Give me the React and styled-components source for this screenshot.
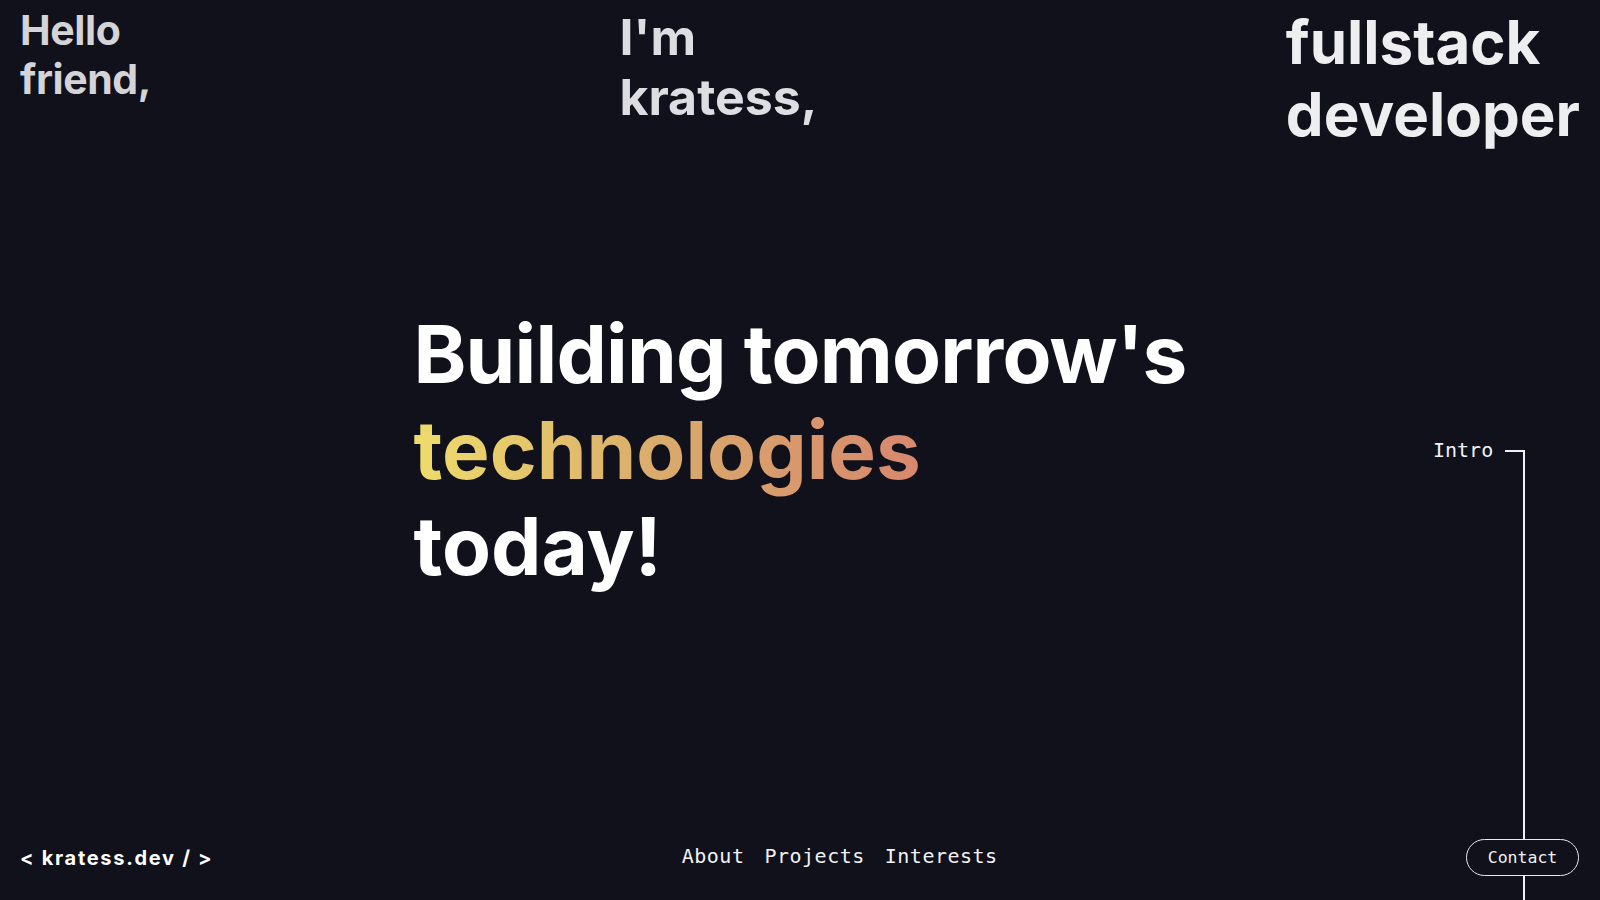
import React from "react";
import styled, { createGlobalStyle } from "styled-components";

const Global = createGlobalStyle`
  html, body { margin: 0; padding: 0; background: #10111a; }
  body { font-family: Inter, "Noto Sans", sans-serif; color: #fff; overflow: hidden; }
  * { box-sizing: border-box; }
`;

const Page = styled.div`
  position: relative;
  height: 100vh;
  width: 100vw;
  display: grid;
  grid-template-rows: 1fr auto 1fr;
  background: #10111a;
  overflow: hidden;
`;

const Header = styled.header`
  align-self: start;
  display: flex;
  justify-content: space-between;
  align-items: flex-start;
  padding: 5px 20px 0 20px;
`;

const Greeting = styled.h2`
  margin: 0;
  margin-top: ${(p) => p.$offset || 0}px;
  font-family: Inter, sans-serif;
  font-weight: 700;
  font-size: ${(p) => p.$size}px;
  line-height: 1.2;
  letter-spacing: ${(p) => p.$tracking || "0"};
  color: ${(p) => p.$color};
`;

const Hero = styled.main`
  justify-self: center;
  align-self: center;
`;

const Headline = styled.h1`
  margin: 0;
  font-family: Inter, sans-serif;
  font-weight: 700;
  font-size: 80px;
  line-height: 96px;
  color: #ffffff;
`;

const Line = styled.span`
  display: block;
  letter-spacing: ${(p) => p.$tracking || "0"};
`;

const Gradient = styled(Line)`
  width: fit-content;
  background: linear-gradient(90deg, #eedc6c 0%, #d9aa6c 50%, #d8876e 100%);
  -webkit-background-clip: text;
  background-clip: text;
  color: transparent;
`;

const Footer = styled.footer`
  align-self: end;
  display: flex;
  justify-content: space-between;
  align-items: center;
  padding: 0 21px 24px 20px;
  position: relative;
  z-index: 2;
`;

const Logo = styled.a`
  font-family: Inter, sans-serif;
  font-weight: 700;
  font-size: 20px;
  color: #ffffff;
  text-decoration: none;
  letter-spacing: 1.7px;
`;

const Nav = styled.nav`
  display: flex;
  gap: 20px;
  padding-bottom: 4px;
`;

const NavLink = styled.a`
  font-family: "DejaVu Sans Mono", "Liberation Mono", monospace;
  font-size: 20px;
  letter-spacing: 0.5px;
  color: #f2f2f5;
  text-decoration: none;
`;

const ContactButton = styled.button`
  font-family: "DejaVu Sans Mono", "Liberation Mono", monospace;
  font-size: 16.5px;
  color: #f2f2f5;
  background: #10111a;
  border: 1.5px solid #e8e8ee;
  border-radius: 999px;
  height: 37px;
  width: 113px;
  padding: 0;
  display: flex;
  align-items: center;
  justify-content: center;
`;

const Indicator = styled.div`
  position: absolute;
  left: 1433px;
  top: 440px;
  display: flex;
  align-items: flex-start;
  gap: 12px;
  z-index: 1;
`;

const IndicatorLabel = styled.span`
  font-family: "DejaVu Sans Mono", "Liberation Mono", monospace;
  font-size: 20px;
  line-height: 20px;
  color: #f2f2f5;
`;

const IndicatorRail = styled.span`
  margin-top: 10px;
  width: 20px;
  height: 460px;
  border-top: 2px solid #f0f0f5;
  border-right: 2px solid #f0f0f5;
`;

export default function App() {
  return (
    <>
      <Global />
      <Page>
        <Header>
          <Greeting $size={41} $color="#d4d4d8" $tracking="-0.01em" $offset={1}>
            Hello
            <br />
            friend,
          </Greeting>
          <Greeting $size={50} $color="#dddde2" $offset={2}>
            I'm
            <br />
            kratess,
          </Greeting>
          <Greeting $size={60} $color="#eeeef1" $offset={1}>
            fullstack
            <br />
            developer
          </Greeting>
        </Header>
        <Hero>
          <Headline>
            <Line $tracking="-0.01em">Building tomorrow's</Line>
            <Gradient>technologies</Gradient>
            <Line>today!</Line>
          </Headline>
        </Hero>
        <Footer>
          <Logo href="#">&lt; kratess.dev / &gt;</Logo>
          <Nav>
            <NavLink href="#">About</NavLink>
            <NavLink href="#">Projects</NavLink>
            <NavLink href="#">Interests</NavLink>
          </Nav>
          <ContactButton>Contact</ContactButton>
        </Footer>
        <Indicator>
          <IndicatorLabel>Intro</IndicatorLabel>
          <IndicatorRail />
        </Indicator>
      </Page>
    </>
  );
}
